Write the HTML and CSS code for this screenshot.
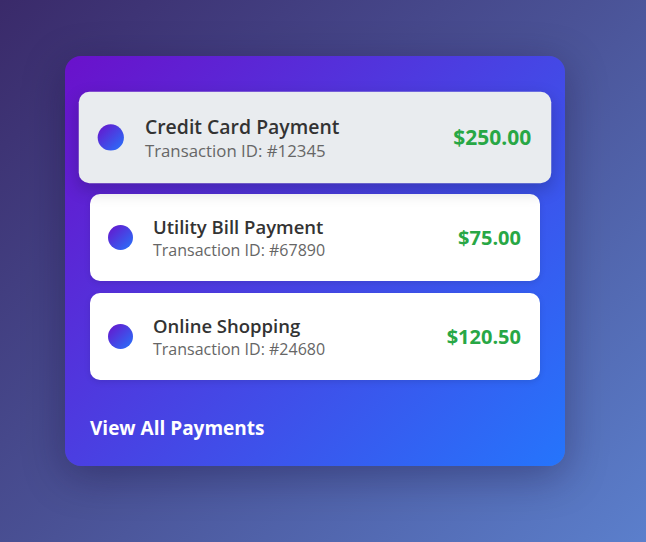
FILE: index.html
```html
<!DOCTYPE html>
<html lang="en">
<head>
<meta charset="utf-8">
<title>Payments</title>
<link rel="stylesheet" href="styles.css">
</head>
<body>
  <div class="card">
    <ul class="list">
      <li class="item is-hover">
        <span class="dot"></span>
        <div class="info">
          <div class="title">Credit Card Payment</div>
          <div class="sub">Transaction ID: #12345</div>
        </div>
        <div class="amount">$250.00</div>
      </li>
      <li class="item">
        <span class="dot"></span>
        <div class="info">
          <div class="title">Utility Bill Payment</div>
          <div class="sub">Transaction ID: #67890</div>
        </div>
        <div class="amount">$75.00</div>
      </li>
      <li class="item">
        <span class="dot"></span>
        <div class="info">
          <div class="title">Online Shopping</div>
          <div class="sub">Transaction ID: #24680</div>
        </div>
        <div class="amount">$120.50</div>
      </li>
    </ul>
    <a class="view-all" href="#">View All Payments</a>
  </div>
</body>
</html>
```
FILE: styles.css
```css
html, body {
  margin: 0;
  height: 100%;
}
body {
  background: linear-gradient(135deg, #3a2a6a 0%, #4a5296 50%, #5b7fcc 100%);
  font-family: "Open Sans", "Noto Sans", sans-serif;
  padding: 56px 0 0 65px;
  box-sizing: border-box;
}
.card {
  width: 500px;
  height: 410px;
  box-sizing: border-box;
  padding: 38px 25px 0 25px;
  border-radius: 16px;
  background: linear-gradient(135deg, #6a11cb 0%, #2575fc 100%);
  box-shadow: 0 10px 40px rgba(20, 10, 50, 0.35);
}
.list {
  list-style: none;
  margin: 0;
  padding: 0;
  display: flex;
  flex-direction: column;
  gap: 12.5px;
}
.item {
  display: flex;
  align-items: center;
  background: #fff;
  border-radius: 10px;
  padding: 20px 19px 20px 18px;
  box-shadow: 0 2px 6px rgba(0, 0, 0, 0.1);
}
.item.is-hover {
  background: #e9ecef;
  transform: scale(1.05);
  box-shadow: 0 6px 16px rgba(0, 0, 0, 0.2);
}
.dot {
  width: 25px;
  height: 25px;
  border-radius: 50%;
  background: linear-gradient(135deg, #6a11cb, #2575fc);
  flex: none;
  margin-right: 20px;
}
.info {
  flex: 1;
}
.title {
  font-size: 18.5px;
  font-weight: 600;
  line-height: 25px;
  color: #333;
}
.sub {
  font-size: 16px;
  line-height: 22px;
  color: #666;
}
.amount {
  font-size: 20px;
  font-weight: 700;
  color: #28a745;
}
.view-all {
  display: inline-block;
  margin-top: 35px;
  color: #fff;
  font-size: 19px;
  font-weight: 700;
  text-decoration: none;
}
```
